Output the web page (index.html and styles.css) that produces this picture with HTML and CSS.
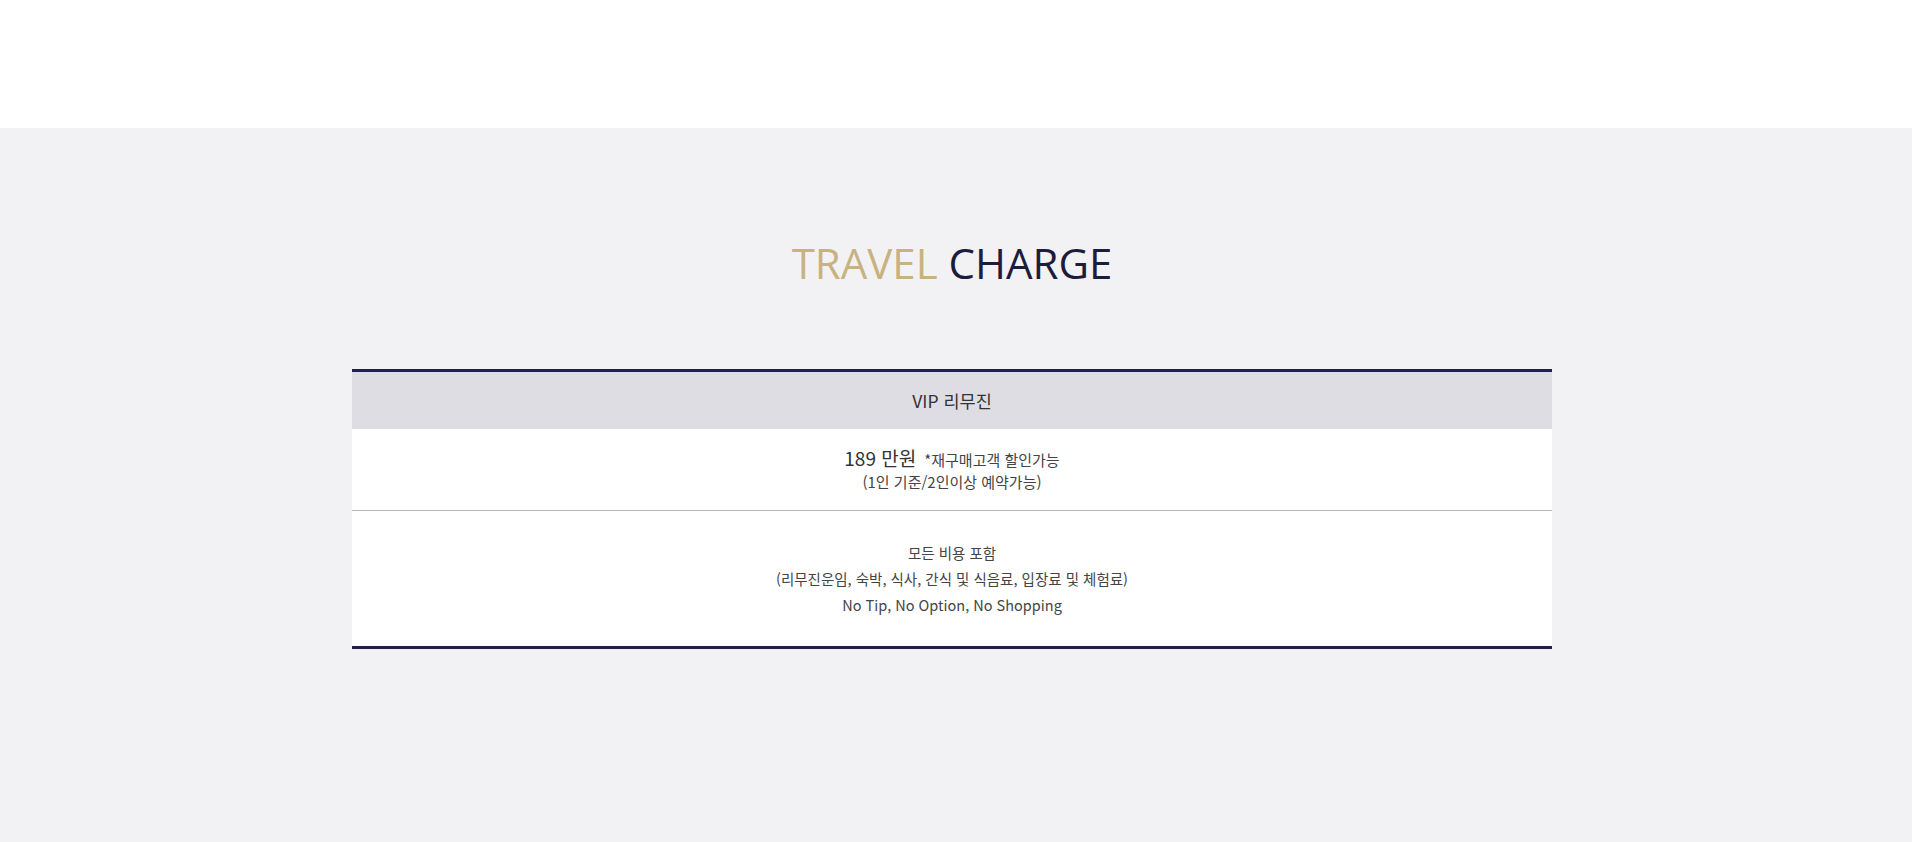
FILE: index.html
```html
<!DOCTYPE html>
<html lang="ko">
<head>
<meta charset="utf-8">
<link rel="stylesheet" href="styles.css">
</head>
<body>
<div class="top"></div>
<section class="charge">
  <h2 class="title"><span class="gold">TRAVEL</span> <span class="navy">CHARGE</span></h2>
  <div class="table">
    <div class="head">VIP 리무진</div>
    <div class="price">
      <div class="line1"><span class="big">189 만원</span><span class="note">*재구매고객 할인가능</span></div>
      <div class="line2">(1인 기준/2인이상 예약가능)</div>
    </div>
    <div class="detail">
      <p>모든 비용 포함</p>
      <p>(리무진운임, 숙박, 식사, 간식 및 식음료, 입장료 및 체험료)</p>
      <p>No Tip, No Option, No Shopping</p>
    </div>
  </div>
</section>
</body>
</html>
```
FILE: styles.css
```css
* { box-sizing: border-box; }
html, body { margin: 0; padding: 0; }
body {
  background: #fff;
  font-family: "Open Sans", "Noto Sans CJK KR", sans-serif;
  color: #3a3a3a;
}
.top { height: 128px; background: #fff; }
.charge {
  background: #f2f2f4;
  height: 714px;
  padding: 0 8px 0 0;
  display: flex;
  flex-direction: column;
  align-items: center;
}
.title {
  margin: 0;
  padding-top: 106px;
  font-weight: 400;
  font-size: 42px;
  line-height: 58px;
  text-align: center;
}
.gold { color: #c8b282; }
.navy { color: #1c1c3c; }
.table {
  margin-top: 77px;
  width: 1200px;
  border-top: 3px solid #22204a;
  border-bottom: 3px solid #22204a;
  background: #fff;
}
.head {
  height: 57px;
  background: #dedde3;
  display: flex;
  align-items: center;
  justify-content: center;
  font-size: 17.5px;
  color: #333;
  font-family: "Noto Sans CJK KR", sans-serif;
}
.price {
  height: 82px;
  border-bottom: 1px solid #b8b6c0;
  display: flex;
  flex-direction: column;
  align-items: center;
  justify-content: center;
  font-family: "Noto Sans CJK KR", sans-serif;
}
.line1 { display: flex; align-items: baseline; gap: 8px; line-height: 22px; }
.big { font-size: 19px; color: #333; }
.note { font-size: 15px; color: #444; }
.line2 { font-size: 15px; line-height: 21px; color: #444; }
.detail {
  height: 135px;
  display: flex;
  flex-direction: column;
  align-items: center;
  justify-content: center;
  font-family: "Noto Sans CJK KR", sans-serif;
  font-size: 14.5px;
  color: #444;
}
.detail p { margin: 0; line-height: 26px; }
```
